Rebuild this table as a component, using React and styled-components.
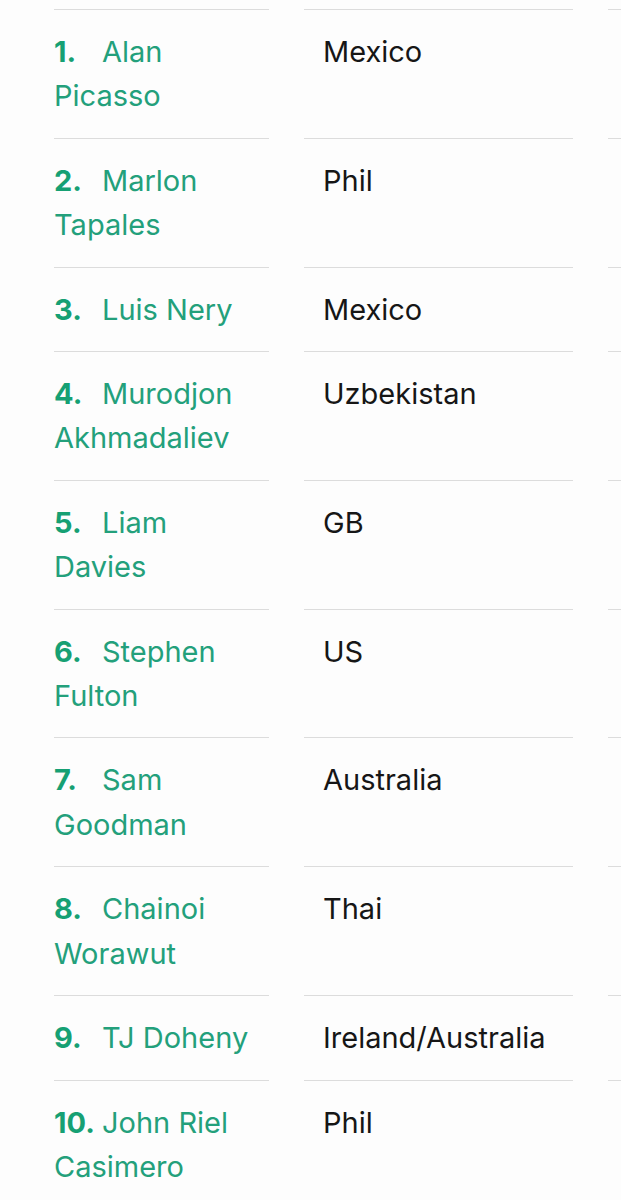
import React from "react";
import styled, { createGlobalStyle } from "styled-components";

const Global = createGlobalStyle`
  html, body { margin: 0; padding: 0; background: #fdfdfd; }
  body { font-family: Inter, "Noto Sans", "Liberation Sans", sans-serif; }
`;

const Page = styled.div`
  padding: 9px 0 0 54px;
  overflow: hidden;
  width: 621px;
  box-sizing: border-box;
`;

const Table = styled.div`
  display: grid;
  grid-template-columns: 215px 269px 200px;
  column-gap: 35px;
  width: max-content;
`;

const Cell = styled.div`
  border-top: 1px solid #dcdcdc;
  padding: 20px 12px 19px ${(p) => (p.$first ? "0" : "19px")};
  font-size: 29px;
  line-height: 44.4px;
  color: ${(p) => (p.$first ? "#23a07b" : "#161616")};
`;

const Num = styled.span`
  display: inline-block;
  width: 48px;
  font-weight: 700;
  color: #16a073;
`;

const rows = [
  ["Alan Picasso", "Mexico"],
  ["Marlon Tapales", "Phil"],
  ["Luis Nery", "Mexico"],
  ["Murodjon Akhmadaliev", "Uzbekistan"],
  ["Liam Davies", "GB"],
  ["Stephen Fulton", "US"],
  ["Sam Goodman", "Australia"],
  ["Chainoi Worawut", "Thai"],
  ["TJ Doheny", "Ireland/Australia"],
  ["John Riel Casimero", "Phil"],
];

export default function App() {
  return (
    <>
      <Global />
      <Page>
        <Table>
          {rows.map(([name, country], i) => (
            <React.Fragment key={i}>
              <Cell $first>
                <Num>{i + 1}.</Num>
                {name}
              </Cell>
              <Cell>{country}</Cell>
              <Cell />
            </React.Fragment>
          ))}
        </Table>
      </Page>
    </>
  );
}
